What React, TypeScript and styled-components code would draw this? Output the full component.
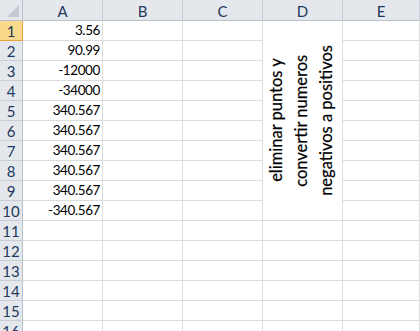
import React from 'react';
import styled, { createGlobalStyle } from 'styled-components';

const GlobalStyle = createGlobalStyle`
  html, body {
    margin: 0;
    padding: 0;
    background: #ffffff;
    overflow: hidden;
  }
`;

const Sheet = styled.div`
  display: grid;
  grid-template-columns: 23px 80px 80px 80px 80px 1fr;
  grid-template-rows: 21px repeat(16, 20px);
  width: 420px;
  height: 331px;
  overflow: hidden;
  font-family: Lato, 'Liberation Sans', sans-serif;
  color: #000;
`;

const Corner = styled.div`
  position: relative;
  background: #e4e8ed;
  border-right: 1px solid #b8c0ca;
  border-bottom: 1px solid #b8c0ca;
  box-sizing: border-box;
`;

const CornerMark = styled.svg`
  position: absolute;
  right: 3px;
  bottom: 3px;
`;

const ColHead = styled.div`
  display: flex;
  align-items: center;
  justify-content: center;
  background: #e4e8ed;
  border-right: 1px solid #c8ced6;
  border-bottom: 1px solid #b8c0ca;
  box-sizing: border-box;
  font-size: 15px;
  color: #1e395b;
  padding-top: 1px;
`;

const RowHead = styled.div<{ $active?: boolean }>`
  display: flex;
  align-items: center;
  justify-content: center;
  background: ${(p) => (p.$active ? '#f9d98b' : '#e4e8ed')};
  border-right: 1px solid ${(p) => (p.$active ? '#e8a33c' : '#b8c0ca')};
  border-bottom: 1px solid ${(p) => (p.$active ? '#e8a33c' : '#c8ced6')};
  box-sizing: border-box;
  font-size: 15px;
  color: #1e395b;
`;

const Cell = styled.div`
  display: flex;
  align-items: flex-end;
  justify-content: flex-end;
  border-right: 1px solid #dadcdd;
  border-bottom: 1px solid #dadcdd;
  box-sizing: border-box;
  padding: 0 2px 2px 0;
  font-size: 13.5px;
  letter-spacing: -0.4px;
  line-height: 16px;
`;

const Merged = styled.div`
  grid-column: 5;
  grid-row: 2 / span 10;
  display: flex;
  align-items: center;
  justify-content: center;
  border-right: 1px solid #dadcdd;
  border-bottom: 1px solid #dadcdd;
  box-sizing: border-box;
  padding-right: 3px;
`;

const Vertical = styled.div`
  writing-mode: vertical-rl;
  transform: rotate(180deg);
  text-align: center;
  font-size: 16.5px;
  line-height: 25px;
  white-space: nowrap;
  -webkit-text-stroke: 0.2px #000;
`;

const cols = ['A', 'B', 'C', 'D', 'E'];
const values: Record<number, string> = {
  1: '3.56',
  2: '90.99',
  3: '-12000',
  4: '-34000',
  5: '340.567',
  6: '340.567',
  7: '340.567',
  8: '340.567',
  9: '340.567',
  10: '-340.567',
};

const App = () => {
  const rows = Array.from({ length: 16 }, (_, i) => i + 1);
  return (
    <>
      <GlobalStyle />
      <Sheet>
        <Corner>
          <CornerMark width="12" height="12" viewBox="0 0 12 12">
            <polygon points="12,0 12,12 0,12" fill="#c3c9d1" />
          </CornerMark>
        </Corner>
        {cols.map((c) => (
          <ColHead key={c}>{c}</ColHead>
        ))}
        {rows.map((r) => (
          <React.Fragment key={r}>
            <RowHead $active={r === 1}>{r}</RowHead>
            <Cell>{values[r] || ''}</Cell>
            <Cell />
            <Cell />
            {r > 10 && <Cell />}
            <Cell />
          </React.Fragment>
        ))}
        <Merged>
          <Vertical>
            eliminar puntos y
            <br />
            convertir numeros
            <br />
            negativos a positivos
          </Vertical>
        </Merged>
      </Sheet>
    </>
  );
};

export default App;
